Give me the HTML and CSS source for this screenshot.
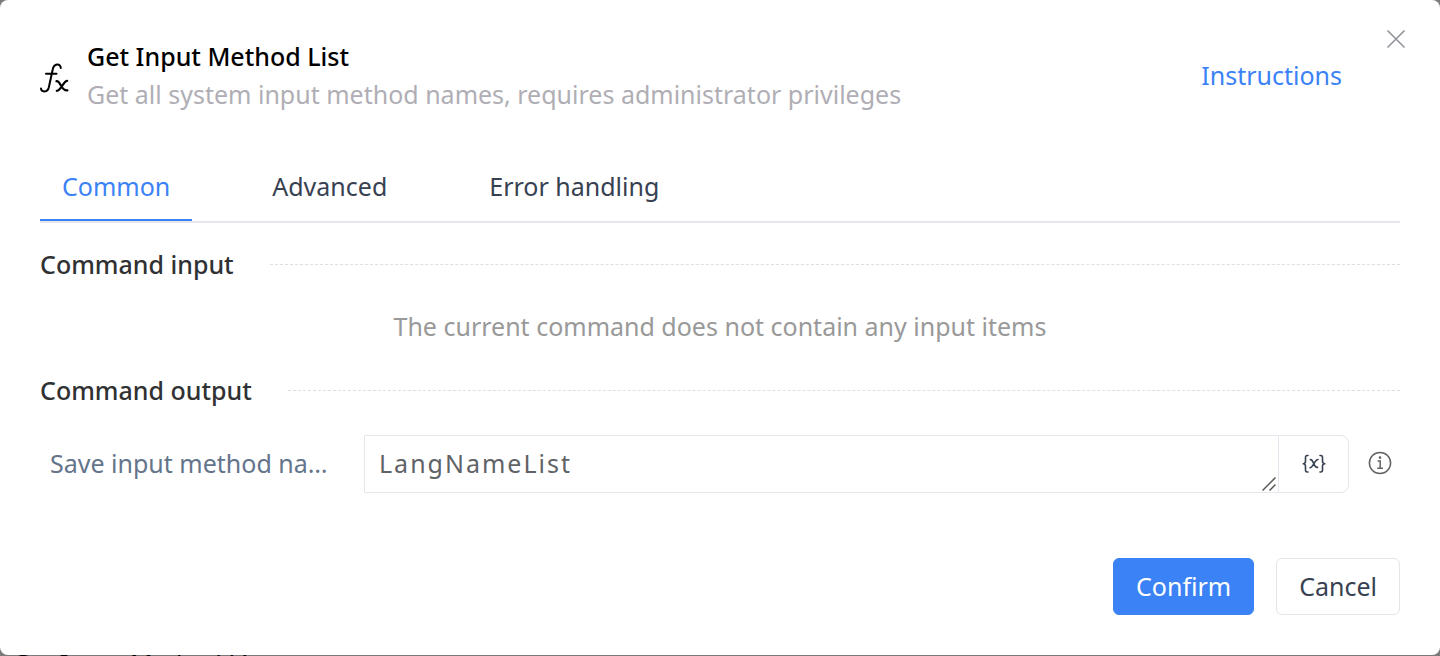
FILE: index.html
```html
<!DOCTYPE html>
<html lang="en">
<head>
<meta charset="utf-8">
<meta name="viewport" content="width=device-width, initial-scale=1">
<title>Get Input Method List</title>
<link rel="stylesheet" href="styles.css">
</head>
<body>
<main class="dialog" role="dialog" aria-labelledby="dialog-title">
  <button class="close" type="button" aria-label="Close">
    <svg width="20" height="20" viewBox="0 0 20 20" fill="none" stroke="#909399" stroke-width="1.6"><path d="M1.5 1.5 18.5 18.5M18.5 1.5 1.5 18.5"/></svg>
  </button>
  <header class="header">
    <svg class="fx" width="29" height="30" viewBox="0 0 29 30" fill="none" stroke="#000" stroke-width="2" stroke-linecap="round" stroke-linejoin="round">
      <path d="M1 25.5C1.4 29.4 7.5 29.8 8.8 24.5L12.7 6.5C13.8 .2 20.6-.2 20.8 5M6 10.8H16.5"/>
      <path stroke-width="2.2" d="M16.5 18.2C20.8 17.5 20.6 28 27.4 27.4M27.2 17.8C23.4 17.8 21 27.8 16.8 27.8"/>
    </svg>
    <div class="heading">
      <h1 class="title" id="dialog-title">Get Input Method List</h1>
      <p class="subtitle">Get all system input method names, requires administrator privileges</p>
    </div>
    <a class="instructions" href="#">Instructions</a>
  </header>

  <nav class="tabs" role="tablist">
    <button class="tab tab-active" type="button" role="tab" aria-selected="true">Common</button>
    <button class="tab" type="button" role="tab" aria-selected="false">Advanced</button>
    <button class="tab" type="button" role="tab" aria-selected="false">Error handling</button>
  </nav>

  <section class="section">
    <h2 class="section-title">Command input</h2>
    <p class="empty">The current command does not contain any input items</p>
  </section>

  <section class="section">
    <h2 class="section-title">Command output</h2>
    <div class="field">
      <label class="label" for="output-name">Save input method na…</label>
      <div class="control">
        <div class="box">
          <textarea class="value" id="output-name" rows="1">LangNameList</textarea>
          <svg class="grip" width="14" height="14" viewBox="0 0 14 14" fill="none" stroke="#555" stroke-width="1.5"><path d="M.5 13.5 13.5 .5M7.5 13.5 13.5 7.5"/></svg>
        </div>
        <button class="variable" type="button" aria-label="Insert variable">
          <svg width="24" height="20" viewBox="0 0 24 20" fill="none" stroke="#374151" stroke-width="1.6" stroke-linecap="round" stroke-linejoin="round">
            <path d="M6 1.5H5.2Q3.5 1.5 3.5 3.5V7Q3.5 9.5 1.3 9.8Q3.5 10 3.5 12.5V16Q3.5 18 5.2 18H6M18 1.5H18.8Q20.5 1.5 20.5 3.5V7Q20.5 9.5 22.7 9.8Q20.5 10 20.5 12.5V16Q20.5 18 18.8 18H18"/>
            <path d="M8.4 5.6C11.8 5 11.3 14 15.6 13.4M16 5.5C12.8 5.5 11.2 13.7 8 13.7"/>
          </svg>
        </button>
      </div>
      <svg class="info" width="24" height="24" viewBox="0 0 24 24" fill="none" stroke="#606266" stroke-width="1.5">
        <circle cx="12" cy="12" r="10.6"/><path d="M9.6 10H12.2V17M9.2 17.3H15"/><circle cx="12" cy="6.6" r="1.3" fill="#606266" stroke="none"/>
      </svg>
    </div>
  </section>

  <footer class="footer">
    <button class="button primary" type="button">Confirm</button>
    <button class="button" type="button">Cancel</button>
  </footer>
</main>
<div class="backdrop-text" aria-hidden="true">Get Input Method List</div>
</body>
</html>
```
FILE: styles.css
```css
* { box-sizing: border-box; }
body {
  margin: 0;
  height: 100vh;
  overflow: hidden;
  position: relative;
  background: #7a7a7c;
  font-family: "Noto Sans", "Open Sans", sans-serif;
  font-size: 25px;
  line-height: 38px;
  color: #374151;
}
h1, h2, p { margin: 0; font-size: inherit; }
button, textarea { font: inherit; color: inherit; }
svg { display: block; flex: none; }
.dialog {
  position: relative;
  z-index: 1;
  display: flex;
  flex-direction: column;
  min-height: calc(100vh - 1px);
  padding: 37px 40px 40px;
  border-radius: 8px;
  background: #fff;
}
.close {
  position: absolute;
  top: 23px;
  right: 28px;
  padding: 6px;
  border: 0;
  background: none;
}
.header { display: flex; align-items: center; gap: 18px; }
.fx { margin-top: 6px; }
.heading { flex: 1; min-width: 0; }
.title { font-weight: 500; color: #000; }
.subtitle { color: #b0aeb5; }
.instructions { margin-right: 58px; color: #3b82f6; text-decoration: none; }
.tabs {
  display: flex;
  gap: 58px;
  margin-top: 41px;
  border-bottom: 2px solid #e4e7ed;
}
.tab {
  height: 67px;
  padding: 0 22px 2px;
  border: 0;
  border-bottom: 2px solid transparent;
  background: none;
}
.tab-active { color: #3b82f6; border-color: #3b82f6; }
.section { margin-top: 22px; }
.section + .section { margin-top: 26px; }
.section-title {
  display: flex;
  align-items: center;
  gap: 36px;
  font-weight: 500;
  color: #303133;
}
.section-title::after { content: ""; flex: 1; border-top: 1px dashed #dcdfe6; }
.empty { margin-top: 24px; text-align: center; color: #999; }
.field { display: flex; align-items: center; margin-top: 26px; padding-right: 8px; }
.label {
  width: 324px;
  padding: 0 22px 2px 10px;
  overflow: hidden;
  white-space: nowrap;
  text-overflow: ellipsis;
  color: #64748b;
}
.control {
  display: flex;
  flex: 1;
  height: 58px;
  border: 1px solid #e4e7ed;
  border-radius: 0 8px 8px 0;
}
.box { position: relative; display: flex; flex: 1; }
.value {
  width: 100%;
  padding: 8px 14px;
  border: 0;
  outline: 0;
  resize: none;
  overflow: hidden;
  background: none;
  color: #606266;
  letter-spacing: 2px;
}
.grip { position: absolute; right: 2px; bottom: 1px; }
.variable {
  display: flex;
  align-items: center;
  justify-content: center;
  width: 70px;
  padding: 0;
  border: 0;
  border-left: 1px solid #e4e7ed;
  background: none;
}
.info { margin: 0 0 2px 19px; }
.footer {
  display: flex;
  justify-content: flex-end;
  gap: 22px;
  margin-top: auto;
}
.button {
  height: 57px;
  padding: 0 22px 2px;
  border: 1px solid #e5e5e5;
  border-radius: 6px;
  background: #fff;
}
.primary { border-color: #3b82f6; background: #3b82f6; color: #fff; }
.backdrop-text {
  position: absolute;
  left: 12px;
  bottom: -26px;
  color: #000;
}
```
